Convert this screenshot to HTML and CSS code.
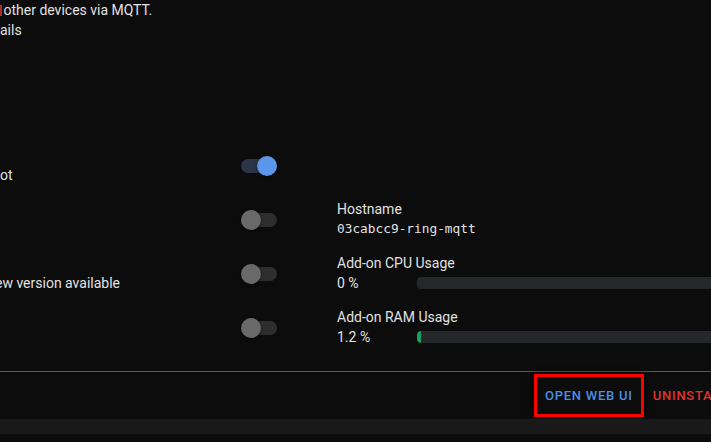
FILE: index.html
```html
<!DOCTYPE html>
<html>
<head>
<meta charset="utf-8">
<link rel="stylesheet" href="styles.css">
</head>
<body>
<div class="card">
  <div class="desc">
    <p><span class="link-frag"></span> other devices via MQTT.</p>
    <p>ails</p>
  </div>
  <div class="main">
    <div class="options">
      <div class="opt-row">
        <div class="opt-label">ot</div>
        <div class="toggle on"><span class="track"></span><span class="knob"></span></div>
      </div>
      <div class="opt-row">
        <div class="opt-label"></div>
        <div class="toggle"><span class="track"></span><span class="knob"></span></div>
      </div>
      <div class="opt-row">
        <div class="opt-label clipped">ew version available</div>
        <div class="toggle"><span class="track"></span><span class="knob"></span></div>
      </div>
      <div class="opt-row">
        <div class="opt-label"></div>
        <div class="toggle"><span class="track"></span><span class="knob"></span></div>
      </div>
    </div>
    <div class="info">
      <div class="info-item">
        <div class="info-label">Hostname</div>
        <div class="info-value mono">03cabcc9-ring-mqtt</div>
      </div>
      <div class="info-item">
        <div class="info-label">Add-on CPU Usage</div>
        <div class="info-value usage">
          <span class="pct">0 %</span>
          <div class="bar"></div>
        </div>
      </div>
      <div class="info-item">
        <div class="info-label">Add-on RAM Usage</div>
        <div class="info-value usage">
          <span class="pct">1.2 %</span>
          <div class="bar"><div class="fill" style="width:1.2%"></div></div>
        </div>
      </div>
    </div>
  </div>
  <div class="divider"></div>
  <div class="actions">
    <button class="btn primary highlighted">Open Web UI</button>
    <button class="btn danger">Uninstall</button>
  </div>
  <div class="band"></div>
</div>
</body>
</html>
```
FILE: styles.css
```css
html, body {
  margin: 0;
  padding: 0;
  background: #0c0c0c;
  overflow: hidden;
}
body {
  width: 711px;
  height: 442px;
  font-family: Roboto, "Liberation Sans", sans-serif;
  font-size: 14px;
  line-height: 20px;
  color: #e1e1e1;
}
.card {
  display: flex;
  flex-direction: column;
}
.desc p {
  margin: 0;
  white-space: nowrap;
}
.link-frag {
  display: inline-block;
  width: 2px;
  height: 11px;
  background: #b22b2b;
  vertical-align: -1px;
  margin-right: -2px;
}
.main {
  display: flex;
  margin-top: 99px;
  gap: 60px;
}
.options {
  display: flex;
  flex-direction: column;
}
.opt-row {
  display: flex;
  align-items: center;
  height: 54px;
}
.opt-label {
  width: 241px;
  margin-top: 18px;
  white-space: nowrap;
  overflow: hidden;
}
.opt-label.clipped {
  text-indent: -5px;
}
.toggle {
  position: relative;
  width: 36px;
  height: 20px;
}
.toggle .track {
  position: absolute;
  left: 0;
  top: 3px;
  width: 36px;
  height: 14px;
  border-radius: 7px;
  background: #2e2e2e;
}
.toggle .knob {
  position: absolute;
  left: 0;
  top: 0;
  width: 20px;
  height: 20px;
  border-radius: 50%;
  background: #696969;
  box-shadow: 0 1px 3px rgba(0,0,0,0.6);
}
.toggle.on .track {
  background: #2c3547;
}
.toggle.on .knob {
  left: 16px;
  background: #5c96ea;
}
.info {
  flex: 1;
  display: flex;
  flex-direction: column;
  gap: 14px;
  padding-top: 60px;
  min-width: 0;
}
.info-value.mono {
  font-family: "DejaVu Sans Mono", monospace;
  font-size: 12.8px;
}
.usage {
  display: flex;
  align-items: center;
}
.pct {
  width: 80px;
  flex: none;
}
.bar {
  flex: 1;
  height: 12px;
  border-radius: 4px 0 0 4px;
  background: #26272b;
  overflow: hidden;
}
.fill {
  height: 100%;
  min-width: 3px;
  background: #1aa15a;
  border-radius: 4px 0 0 4px;
}
.divider {
  margin-top: 16px;
  height: 1px;
  background: #45579a;
}
.actions {
  display: flex;
  align-items: center;
  height: 47px;
  padding-left: 534px;
  white-space: nowrap;
}
.btn {
  background: none;
  border: 3px solid transparent;
  font-family: Roboto, "Liberation Sans", sans-serif;
  font-weight: 500;
  font-size: 13px;
  letter-spacing: 0.75px;
  text-transform: uppercase;
  padding: 0 8px;
  height: 43px;
  flex: none;
}
.btn.primary {
  color: #4b8fe6;
}
.btn.danger {
  color: #e0342f;
  padding-left: 6px;
}
.btn.highlighted {
  border-color: #ff0000;
  box-shadow: 0 0 6px rgba(0,0,0,0.8);
}
.band {
  height: 15px;
  background: #191919;
}
```
